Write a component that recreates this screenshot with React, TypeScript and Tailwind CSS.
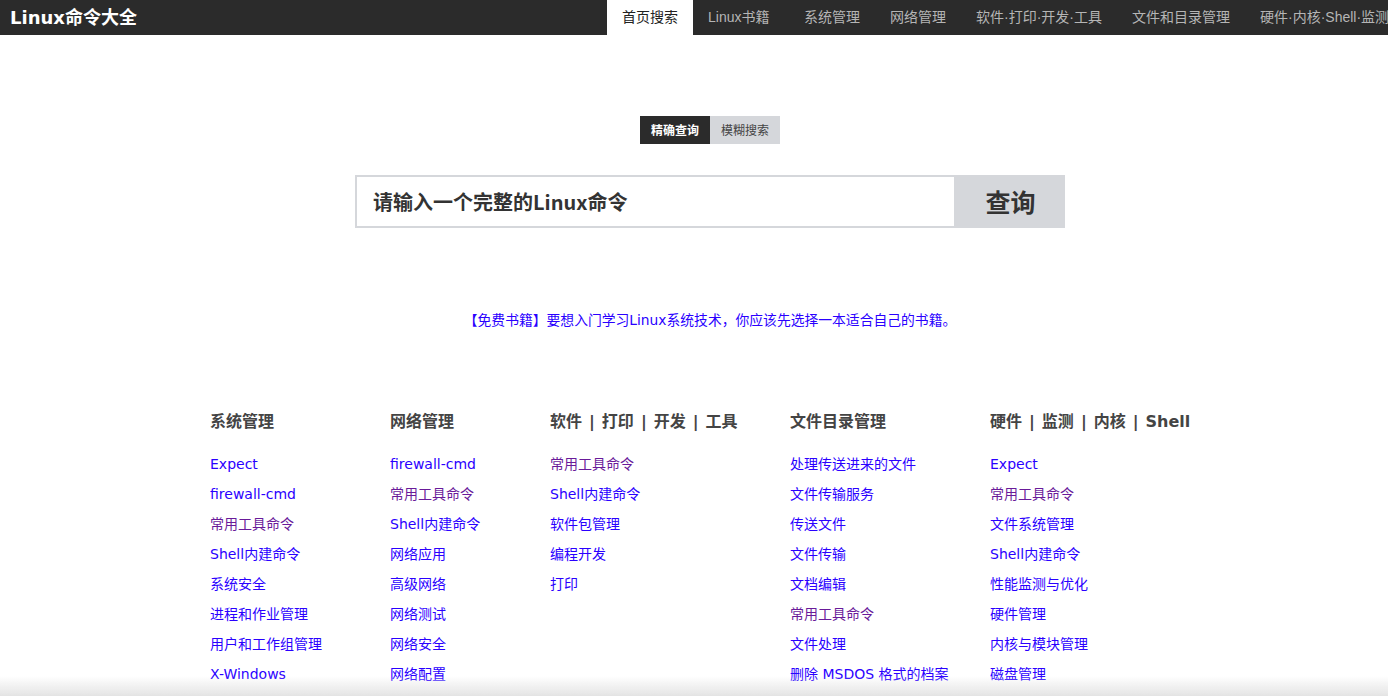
import React from "react";

const navItems = [
  "系统管理",
  "网络管理",
  "软件·打印·开发·工具",
  "文件和目录管理",
  "硬件·内核·Shell·监测",
];

type L = { t: string; v?: boolean };

const columns: { title: string[]; w: string; links: L[] }[] = [
  {
    title: ["系统管理"],
    w: "w-[180px]",
    links: [
      { t: "Expect" },
      { t: "firewall-cmd" },
      { t: "常用工具命令", v: true },
      { t: "Shell内建命令" },
      { t: "系统安全" },
      { t: "进程和作业管理" },
      { t: "用户和工作组管理" },
      { t: "X-Windows" },
    ],
  },
  {
    title: ["网络管理"],
    w: "w-[160px]",
    links: [
      { t: "firewall-cmd" },
      { t: "常用工具命令", v: true },
      { t: "Shell内建命令" },
      { t: "网络应用" },
      { t: "高级网络" },
      { t: "网络测试" },
      { t: "网络安全" },
      { t: "网络配置" },
    ],
  },
  {
    title: ["软件", "打印", "开发", "工具"],
    w: "w-[240px]",
    links: [
      { t: "常用工具命令", v: true },
      { t: "Shell内建命令" },
      { t: "软件包管理" },
      { t: "编程开发" },
      { t: "打印" },
    ],
  },
  {
    title: ["文件目录管理"],
    w: "w-[200px]",
    links: [
      { t: "处理传送进来的文件" },
      { t: "文件传输服务" },
      { t: "传送文件" },
      { t: "文件传输" },
      { t: "文档编辑" },
      { t: "常用工具命令", v: true },
      { t: "文件处理" },
      { t: "删除 MSDOS 格式的档案" },
    ],
  },
  {
    title: ["硬件", "监测", "内核", "Shell"],
    w: "w-[220px]",
    links: [
      { t: "Expect" },
      { t: "常用工具命令", v: true },
      { t: "文件系统管理" },
      { t: "Shell内建命令" },
      { t: "性能监测与优化" },
      { t: "硬件管理" },
      { t: "内核与模块管理" },
      { t: "磁盘管理" },
    ],
  },
];

export default function App() {
  return (
    <div className="min-h-[696px] bg-white font-['DejaVu_Sans','Noto_Sans_CJK_SC',sans-serif]">
      <header className="flex h-[35px] items-stretch overflow-hidden bg-[#2b2b2b]">
        <div className="flex w-[607px] shrink-0 items-center pl-[10px] text-[18px] font-bold text-white">
          Linux命令大全
        </div>
        <nav className="flex items-stretch whitespace-nowrap text-[14px] font-['Liberation_Sans','Noto_Sans_CJK_SC',sans-serif]">
          <span className="flex items-center bg-white px-[15px] text-[#222]">首页搜索</span>
          <span className="flex w-[96px] items-center pl-[15px] text-[#b5b5b5]">Linux书籍</span>
          {navItems.map((n) => (
            <span key={n} className="flex items-center px-[15px] text-[#b5b5b5]">
              {n}
            </span>
          ))}
        </nav>
      </header>

      <main className="pl-[32px]">
        <div className="mt-[81px] flex justify-center font-['Noto_Sans_CJK_SC',sans-serif] text-[12px]">
          <span className="flex h-[28px] w-[70px] items-center justify-center bg-[#2b2b2b] font-bold text-white">
            精确查询
          </span>
          <span className="flex h-[28px] w-[70px] items-center justify-center bg-[#d5d7db] text-[#444]">
            模糊搜索
          </span>
        </div>

        <div className="mt-[31px] flex justify-center">
          <div className="flex h-[53px] w-[601px] items-center border-2 border-[#d5d7db] bg-white pl-[16px] font-['Noto_Sans_CJK_SC',sans-serif] text-[20px] font-semibold text-[#333]">
            请输入一个完整的Linux命令
          </div>
          <div className="flex h-[53px] w-[109px] items-center justify-center bg-[#d5d7db] font-['Noto_Sans_CJK_SC',sans-serif] text-[25px] font-bold text-[#333]">
            查询
          </div>
        </div>

        <p className="mt-[82px] text-center text-[13.8px] leading-[20px] text-[#2a00ff]">
          【免费书籍】要想入门学习Linux系统技术，你应该先选择一本适合自己的书籍。
        </p>

        <div className="mx-auto mt-[80px] flex w-[1000px]">
          {columns.map((c) => (
            <div key={c.title.join()} className={`${c.w} shrink-0`}>
              <h3 className="whitespace-nowrap text-[16px] font-bold leading-[24px] text-[#444]">
                {c.title.map((p, i) => (
                  <React.Fragment key={p}>
                    {i > 0 && <span className="mx-[7px]">|</span>}
                    {p}
                  </React.Fragment>
                ))}
              </h3>
              <ul className="mt-[15px]">
                {c.links.map((l, i) => (
                  <li
                    key={i}
                    className={`text-[14px] leading-[30px] ${l.v ? "text-[#6a1a9a]" : "text-[#2a00ff]"}`}
                  >
                    {l.t}
                  </li>
                ))}
              </ul>
            </div>
          ))}
        </div>
      </main>

      <div className="pointer-events-none fixed bottom-0 left-0 right-0 h-[20px] bg-gradient-to-b from-white/0 to-[#e4e4e4]" />
    </div>
  );
}
